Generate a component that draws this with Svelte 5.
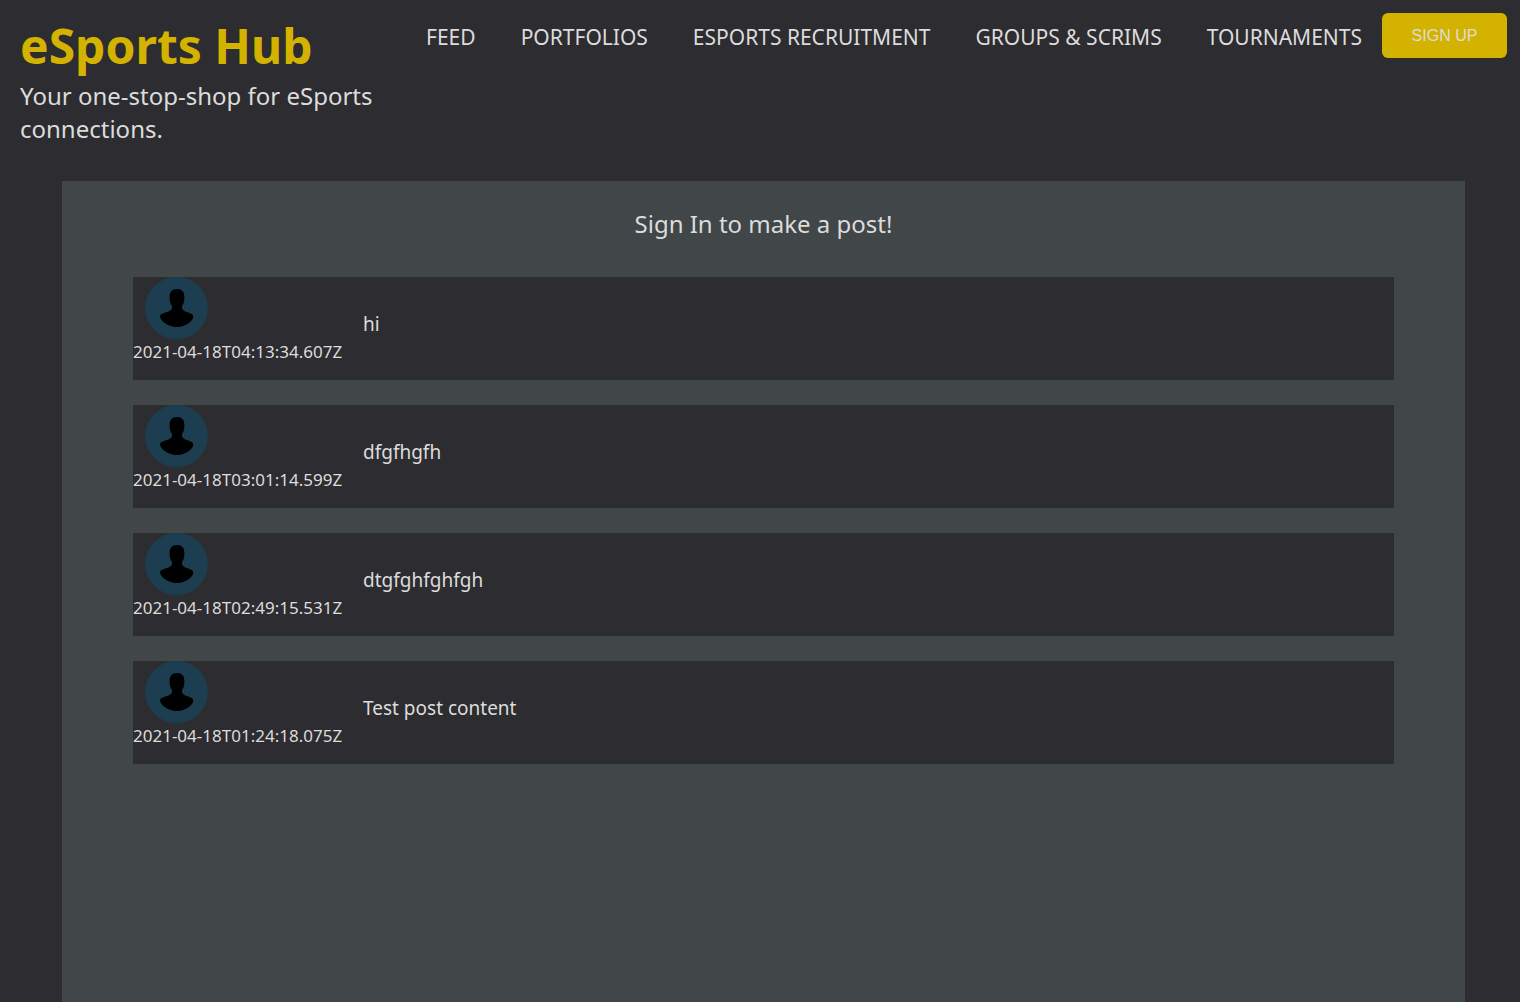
<script lang="ts">
    type Post = {
        date: string;
        content: string;
    };

    const links = ['FEED', 'PORTFOLIOS', 'ESPORTS RECRUITMENT', 'GROUPS & SCRIMS', 'TOURNAMENTS'];

    let posts = $state<Post[]>([
        { date: '2021-04-18T04:13:34.607Z', content: 'hi' },
        { date: '2021-04-18T03:01:14.599Z', content: 'dfgfhgfh' },
        { date: '2021-04-18T02:49:15.531Z', content: 'dtgfghfghfgh' },
        { date: '2021-04-18T01:24:18.075Z', content: 'Test post content' }
    ]);
</script>

<div class="page">
    <header>
        <div class="brand">
            <h1>eSports Hub</h1>
            <p>Your one-stop-shop for eSports connections.</p>
        </div>
        <nav>
            <div class="links">
                {#each links as link}
                    <a href="#top">{link}</a>
                {/each}
            </div>
            <button>SIGN UP</button>
        </nav>
    </header>

    <main>
        <h2>Sign In to make a post!</h2>
        {#each posts as post (post.date)}
            <article>
                <div class="author">
                    <svg class="avatar" viewBox="0 0 63 62" aria-hidden="true">
                        <ellipse cx="31.5" cy="31" rx="31.5" ry="31" fill="#1c3e50" />
                        <path
                            d="M32 12C27 12 24.500 15 24.700 19.500C24.300 23 25 26.500 26.800 28.500C27.500 31 27 32.500 24.500 34C21.500 35.500 17.500 36 15.300 38C14.600 39.500 15.500 42 17 43.500C20.500 47.500 26 50 31.800 50C37.600 50 43 47.500 46.500 43.500C48 42 48.700 39.500 48 38C46 36 42 35.500 39.500 34C37 32.500 36.500 31 37.200 28.500C39 26.500 39.700 23 39.300 19.500C39.500 15 37 12 32 12Z"
                            fill="#000"
                        />
                    </svg>
                    <time datetime={post.date}>{post.date}</time>
                </div>
                <p>{post.content}</p>
            </article>
        {/each}
    </main>
</div>

<style>
    :global(body) {
        background: #2d2c30;
    }

    .page {
        display: flex;
        flex-direction: column;
        min-height: 100vh;
        color: #dcdcdc;
        font-family: "Segoe UI", "Noto Sans", sans-serif;
    }

    header {
        display: flex;
        justify-content: space-between;
        align-items: flex-start;
        padding: 13px 13px 36px 20px;
    }

    .brand {
        width: 370px;
    }

    h1 {
        margin: 0;
        color: #d4b200;
        font-size: 48px;
        line-height: 66px;
    }

    .brand p {
        margin: 0;
        font-size: 24px;
        line-height: 33px;
    }

    nav {
        display: flex;
        align-items: flex-start;
        gap: 20px;
        white-space: nowrap;
    }

    .links {
        display: flex;
        gap: 45px;
    }

    nav a {
        color: inherit;
        font-size: 21px;
        line-height: 48px;
        text-decoration: none;
    }

    button {
        width: 125px;
        height: 45px;
        background: #d4b200;
        border: none;
        border-radius: 6px;
        color: #dcdcdc;
        font-family: "Liberation Sans", Arial, sans-serif;
        font-size: 16px;
        cursor: pointer;
    }

    main {
        flex: 1;
        margin: 0 55px 0 62px;
        background: #414648;
    }

    h2 {
        margin: 0;
        padding: 26px 0 37px;
        font-size: 24px;
        font-weight: normal;
        line-height: 33px;
        text-align: center;
    }

    article {
        display: flex;
        align-items: flex-start;
        min-height: 103px;
        margin: 0 71px 25px;
        background: #2d2c30;
    }

    .author {
        display: flex;
        flex-direction: column;
        width: 230px;
    }

    .avatar {
        width: 63px;
        height: 62px;
        margin-left: 12px;
    }

    time {
        font-size: 17px;
        line-height: 25px;
    }

    article p {
        margin: 0;
        padding-top: 35px;
        font-size: 19px;
        line-height: 25px;
    }
</style>
